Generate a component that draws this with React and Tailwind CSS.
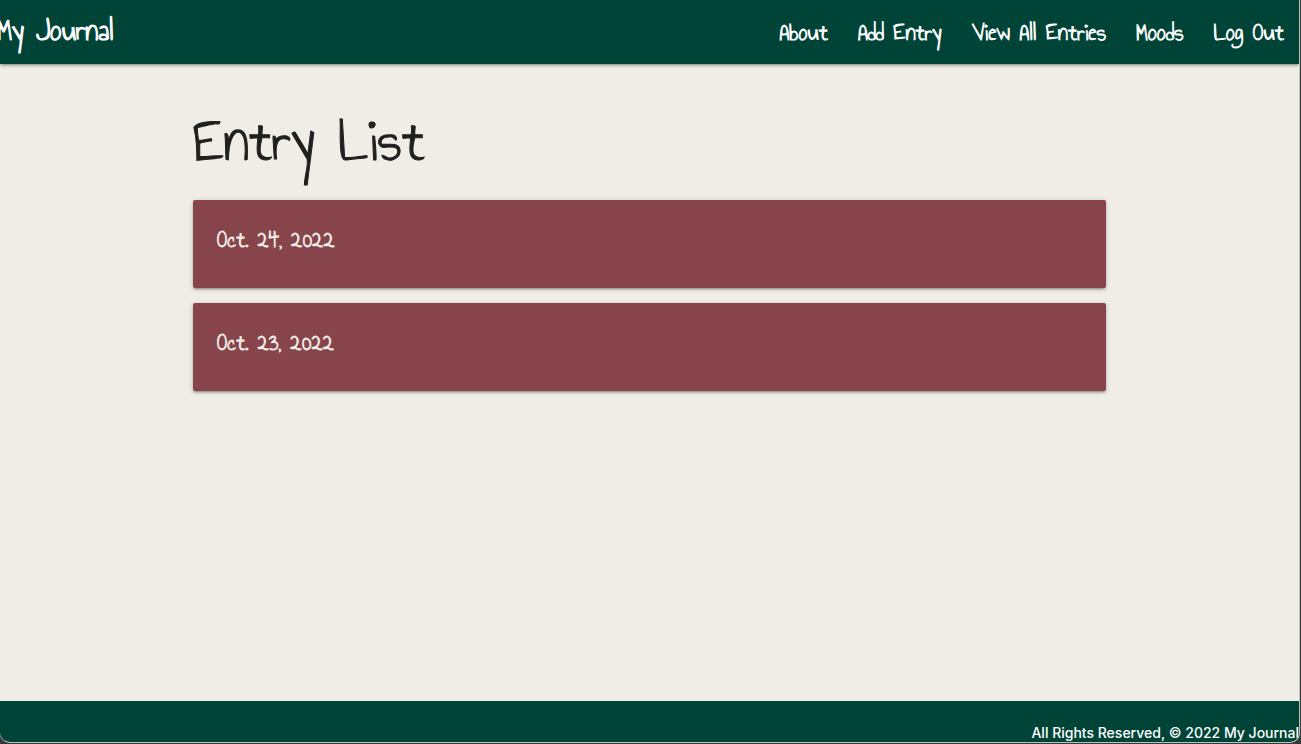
const links = ["About", "Add Entry", "View All Entries", "Moods", "Log Out"];
const entries = ["Oct. 24, 2022", "Oct. 23, 2022"];
const raised =
  "shadow-[0_2px_2px_0_rgba(0,0,0,0.14),0_3px_1px_-2px_rgba(0,0,0,0.12),0_1px_5px_0_rgba(0,0,0,0.2)]";

export default function App() {
  return (
    <div className="flex min-h-screen flex-col bg-[#383a39] pr-px pb-px font-['Annie_Use_Your_Telescope',Lato,cursive]">
      <div className="flex grow flex-col overflow-hidden rounded-b-[10px] border-r border-b border-[#b9c4bf] bg-[#f0ede7]">
        <header className={`flex h-16 items-start justify-between bg-[#004438] text-white ${raised}`}>
          <a href="#home" className="-ml-[3px] text-[32px] leading-[60px] font-bold whitespace-nowrap">My Journal</a>
          <nav>
            <ul className="flex">
              {links.map((label) => (
                <li key={label}>
                  <a href="#page" className="block px-[15px] text-[25px] leading-[64px] font-bold whitespace-nowrap">
                    {label}
                  </a>
                </li>
              ))}
            </ul>
          </nav>
        </header>

        <main className="mx-auto w-full max-w-[913px] grow pt-[43px]">
          <h1 className="mb-[25px] text-[63px] leading-[68px] text-[#20211f] [-webkit-text-stroke:1px]">Entry List</h1>
          <ul className="flex flex-col gap-[15px]">
            {entries.map((date) => (
              <li key={date} className={`h-[88px] rounded-[2px] bg-[#87444b] p-6 ${raised}`}>
                <a href="#entry" className="block text-2xl leading-8 font-bold text-[#f0ede7]">{date}</a>
              </li>
            ))}
          </ul>
        </main>

        <footer className="flex h-[41px] items-end justify-end bg-[#004438] font-[Inter,sans-serif] text-[14px] leading-[18px] font-medium whitespace-nowrap text-white">
          All Rights Reserved, © 2022 My Journal
        </footer>
      </div>
    </div>
  );
}
